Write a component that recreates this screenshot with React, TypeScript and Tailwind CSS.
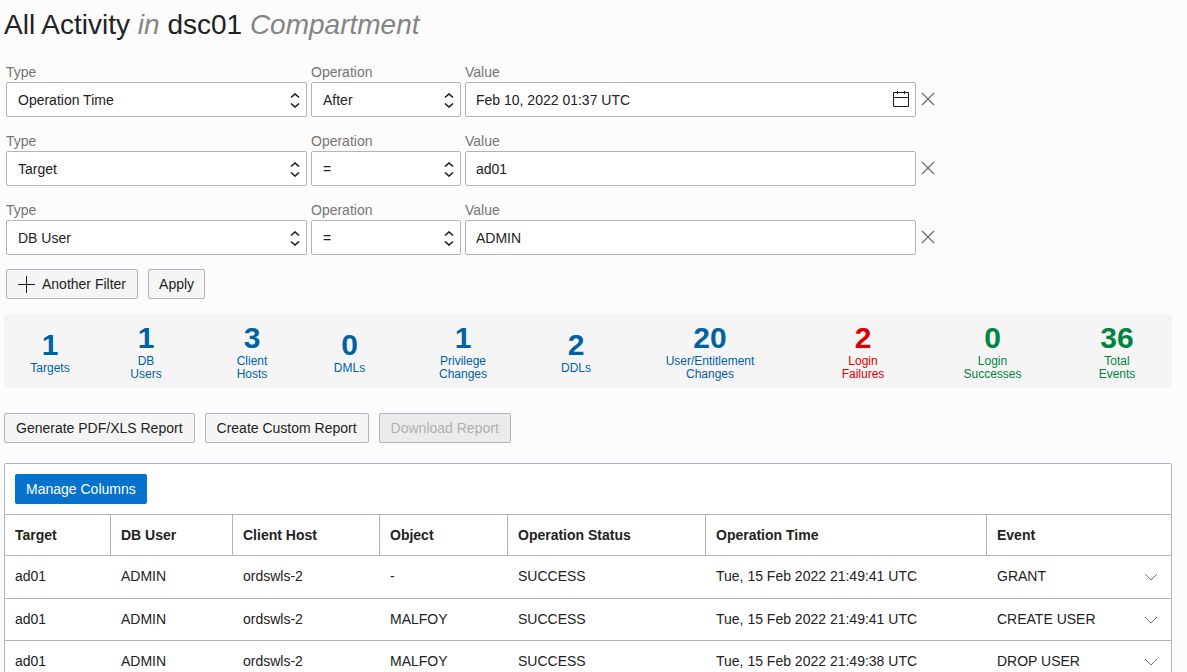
import React from 'react';

type Filter = { id: string; type: string; operation: string; value: string; date?: boolean };

const filters: Filter[] = [
  { id: 'time', type: 'Operation Time', operation: 'After', value: 'Feb 10, 2022 01:37 UTC', date: true },
  { id: 'target', type: 'Target', operation: '=', value: 'ad01' },
  { id: 'user', type: 'DB User', operation: '=', value: 'ADMIN' },
];

const typeOptions = ['Operation Time', 'Target', 'DB User'];
const operationOptions = ['After', 'Before', '=', '!='];

const blue = 'text-[#0062a3]';
const red = 'text-[#d90000]';
const green = 'text-[#00843f]';

const stats = [
  { count: 1, label: 'Targets', color: blue },
  { count: 1, label: 'DB\nUsers', color: blue },
  { count: 3, label: 'Client\nHosts', color: blue },
  { count: 0, label: 'DMLs', color: blue },
  { count: 1, label: 'Privilege\nChanges', color: blue },
  { count: 2, label: 'DDLs', color: blue },
  { count: 20, label: 'User/Entitlement\nChanges', color: blue },
  { count: 2, label: 'Login\nFailures', color: red },
  { count: 0, label: 'Login\nSuccesses', color: green },
  { count: 36, label: 'Total\nEvents', color: green },
];

const columns = [
  { name: 'Target', width: 'w-[106px]' },
  { name: 'DB User', width: 'w-[122px]' },
  { name: 'Client Host', width: 'w-[147px]' },
  { name: 'Object', width: 'w-[128px]' },
  { name: 'Operation Status', width: 'w-[198px]' },
  { name: 'Operation Time', width: 'w-[281px]' },
  { name: 'Event', width: '' },
];

const rows = [
  ['ad01', 'ADMIN', 'ordswls-2', '-', 'SUCCESS', 'Tue, 15 Feb 2022 21:49:41 UTC', 'GRANT'],
  ['ad01', 'ADMIN', 'ordswls-2', 'MALFOY', 'SUCCESS', 'Tue, 15 Feb 2022 21:49:41 UTC', 'CREATE USER'],
  ['ad01', 'ADMIN', 'ordswls-2', 'MALFOY', 'SUCCESS', 'Tue, 15 Feb 2022 21:49:38 UTC', 'DROP USER'],
];

const buttonClass =
  'flex h-[30px] items-center rounded-[2px] border border-[#aeb5bf] bg-[#f5f5f5] disabled:bg-[#ebebeb] disabled:text-[#b0b0b0]';
const fieldClass =
  'block h-[35px] w-full appearance-none rounded-[2px] border border-[#aeb5bf] bg-white';
const labelClass = 'block pb-[2px] leading-4 text-[#757575]';
const cellClass = 'border-b border-[#aeb5bf] px-[10px] pb-[2px]';

function SelectField({ id, label, value, options }: { id: string; label: string; value: string; options: string[] }) {
  return (
    <div>
      <label htmlFor={id} className={labelClass}>{label}</label>
      <div className="relative">
        <select id={id} defaultValue={value} className={`${fieldClass} pl-[11px] pr-6`}>
          {options.map((o) => <option key={o}>{o}</option>)}
        </select>
        <svg className="pointer-events-none absolute right-[7px] top-[11px]" width="10" height="15" viewBox="0 0 10 15" fill="none" stroke="#1c1c1c" strokeWidth="1.6" aria-hidden="true">
          <path d="M1 4.5L5 1L9 4.5M1 10.5L5 14L9 10.5" />
        </svg>
      </div>
    </div>
  );
}

function FilterRow({ filter }: { filter: Filter }) {
  return (
    <div className="grid grid-cols-[301px_150px_451px_auto] justify-start gap-1">
      <SelectField id={`${filter.id}-type`} label="Type" value={filter.type} options={typeOptions} />
      <SelectField id={`${filter.id}-op`} label="Operation" value={filter.operation} options={operationOptions} />
      <div>
        <label htmlFor={`${filter.id}-value`} className={labelClass}>Value</label>
        <div className="relative">
          <input id={`${filter.id}-value`} type="text" defaultValue={filter.value} className={`${fieldClass} px-[10px]`} />
          {filter.date && (
            <button type="button" aria-label="Choose date" className="absolute right-[7px] top-[9px]">
              <svg className="block" width="16" height="16" viewBox="0 0 16 16" fill="none" stroke="#1c1c1c">
                <path d="M0.5 1.5H15.5V15.5H0.5ZM0.5 6.5H15.5M4.5 0V3M11.5 0V3" />
              </svg>
            </button>
          )}
        </div>
      </div>
      <button type="button" aria-label="Remove filter" className="flex h-[35px] w-4 items-center justify-center self-end pb-[2px]">
        <svg width="14" height="14" viewBox="0 0 14 14" fill="none" stroke="#6b6b6b" strokeWidth="1.2">
          <path d="M1 1L13 13M13 1L1 13" />
        </svg>
      </button>
    </div>
  );
}

export default function App() {
  return (
    <main className="min-h-screen bg-[#fcfcfc] pl-1 pr-[15px] pt-[5px] font-['Liberation_Sans',Arial,sans-serif] text-[14px] leading-[18px] text-[#222222]">
      <h1 className="text-[28px] leading-10">
        All Activity <em className="text-[#858585]">in</em> dsc01 <em className="text-[#858585]">Compartment</em>
      </h1>

      <form className="mt-[19px] pl-[2px]" onSubmit={(e) => e.preventDefault()}>
        <div className="flex flex-col gap-4">
          {filters.map((f) => <FilterRow key={f.id} filter={f} />)}
        </div>
        <div className="mt-[14px] flex gap-[10px]">
          <button type="button" className={`${buttonClass} gap-[6px] px-[11px]`}>
            <svg width="18" height="18" viewBox="0 0 18 18" stroke="#1c1c1c" aria-hidden="true">
              <path d="M0 9.5H17M8.5 1V18" />
            </svg>
            Another Filter
          </button>
          <button type="submit" className={`${buttonClass} px-[10px]`}>Apply</button>
        </div>
      </form>

      <section className="mt-[15px] grid h-[74px] grid-cols-[92fr_100fr_112fr_83fr_144fr_82fr_186fr_120fr_139fr_110fr] items-center bg-[#f5f5f5]">
        {stats.map((s) => (
          <div key={s.label} className={`text-center ${s.color}`}>
            <div className="text-[30px] font-bold leading-[34px]">{s.count}</div>
            <div className="whitespace-pre-line text-[12px] leading-[13px]">{s.label}</div>
          </div>
        ))}
      </section>

      <div className="mt-[25px] flex gap-[10px]">
        <button type="button" className={`${buttonClass} px-[11px]`}>Generate PDF/XLS Report</button>
        <button type="button" className={`${buttonClass} px-[11px]`}>Create Custom Report</button>
        <button type="button" disabled className={`${buttonClass} px-[11px]`}>Download Report</button>
      </div>

      <section className="mt-5 rounded-t-[2px] border border-b-0 border-[#aeb5bf] bg-white">
        <div className="p-[10px]">
          <button type="button" className="flex h-[30px] items-center rounded-[2px] bg-[#0572ce] px-[11px] text-white">Manage Columns</button>
        </div>
        <table className="w-full table-fixed border-separate border-spacing-0 text-left">
          <thead>
            <tr className="h-[42px]">
              {columns.map((c) => (
                <th key={c.name} scope="col" className={`${c.width} border-y border-r border-[#aeb5bf] px-[10px] font-bold last:border-r-0`}>{c.name}</th>
              ))}
            </tr>
          </thead>
          <tbody>
            {rows.map((r, i) => (
              <tr key={i} className="odd:h-[43px] even:h-[42px]">
                {r.slice(0, -1).map((cell, j) => <td key={j} className={cellClass}>{cell}</td>)}
                <td className={cellClass}>
                  <div className="flex items-center justify-between">
                    {r[r.length - 1]}
                    <button type="button" aria-label="Expand row" className="mr-[3px] pt-[2px]">
                      <svg className="block" width="14" height="8" viewBox="0 0 14 8" fill="none" stroke="#757575">
                        <path d="M1 1L7 7L13 1" />
                      </svg>
                    </button>
                  </div>
                </td>
              </tr>
            ))}
          </tbody>
        </table>
      </section>
    </main>
  );
}
